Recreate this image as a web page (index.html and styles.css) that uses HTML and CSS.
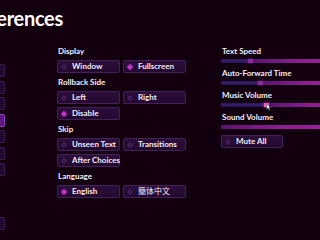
FILE: index.html
```html
<!DOCTYPE html>
<html>
<head>
<meta charset="utf-8">
<link rel="stylesheet" href="styles.css">
</head>
<body>
<header class="title"><h1>Preferences</h1></header>
<div class="main">
  <nav class="nav">
    <div class="navbtn">History</div>
    <div class="navbtn">Save</div>
    <div class="navbtn">Load</div>
    <div class="navbtn active">Preferences</div>
    <div class="navbtn">About</div>
    <div class="navbtn">Help</div>
    <div class="navbtn">Main Menu</div>
    <div class="navbtn last">Return</div>
  </nav>
  <section class="prefs">
    <div class="group">
      <div class="label">Display</div>
      <div class="opts">
        <div class="btn"><span class="dia"></span>Window</div>
        <div class="btn"><span class="dia on"></span>Fullscreen</div>
      </div>
    </div>
    <div class="group">
      <div class="label">Rollback Side</div>
      <div class="opts">
        <div class="btn"><span class="dia"></span>Left</div>
        <div class="btn"><span class="dia"></span>Right</div>
        <div class="btn"><span class="dia on"></span>Disable</div>
      </div>
    </div>
    <div class="group">
      <div class="label">Skip</div>
      <div class="opts">
        <div class="btn"><span class="dia"></span>Unseen Text</div>
        <div class="btn"><span class="dia"></span>Transitions</div>
        <div class="btn"><span class="dia"></span>After Choices</div>
      </div>
    </div>
    <div class="group">
      <div class="label">Language</div>
      <div class="opts">
        <div class="btn"><span class="dia on"></span>English</div>
        <div class="btn cjk"><span class="dia"></span>簡体中文</div>
      </div>
    </div>
  </section>
  <section class="sliders">
    <div class="label">Text Speed</div>
    <div class="slider"><div class="track"><div class="left" style="width:27px"></div><div class="thumb"></div><div class="right"></div></div></div>
    <div class="label">Auto-Forward Time</div>
    <div class="slider"><div class="track"><div class="left" style="width:37px"></div><div class="thumb"></div><div class="right"></div></div></div>
    <div class="label">Music Volume</div>
    <div class="slider"><div class="track"><div class="left" style="width:43px"></div><div class="thumb hot"></div><div class="right"></div>
      <svg class="cursor" width="5" height="8" viewBox="0 0 5 8"><path d="M0.5 0.5 L0.5 6.5 L2 5 L3.2 7.5 L4 7 L3 4.6 L4.6 4.6 Z" fill="#fff" stroke="#222" stroke-width="0.5"/></svg>
    </div></div>
    <div class="label">Sound Volume</div>
    <div class="slider"><div class="track"><div class="left" style="width:0px"></div><div class="thumb dim"></div><div class="right"></div></div></div>
    <div class="btn mute"><span class="dia"></span>Mute All</div>
  </section>
</div>
</body>
</html>
```

FILE: styles.css
```css
* { box-sizing: border-box; }
html, body { margin: 0; padding: 0; }
body {
  width: 320px;
  height: 240px;
  overflow: hidden;
  background: #12000f;
  color: #fff;
  font-family: Lato, "Noto Sans CJK JP", sans-serif;
}
.title {
  height: 46px;
  width: 63px;
  display: flex;
  justify-content: flex-end;
}
.title h1 {
  margin: 0;
  padding-top: 8px;
  font-size: 20px;
  line-height: 20px;
  font-weight: 700;
  letter-spacing: -0.3px;
  white-space: nowrap;
}
.main {
  display: flex;
  align-items: flex-start;
}
.nav {
  width: 5px;
  flex: none;
  padding-top: 18px;
  display: flex;
  flex-direction: column;
  align-items: flex-end;
  gap: 3.5px;
}
.navbtn {
  flex: none;
  width: 60px;
  height: 13px;
  border: 1px solid #3d1a52;
  background: #22082f;
  border-radius: 2px;
  font-size: 8px;
  font-weight: 700;
  line-height: 11px;
  text-align: right;
  padding-right: 4px;
  color: #5a3a6a;
}
.navbtn.active {
  background: #5a1880;
  border-color: #9a3ac0;
  color: #fff;
}
.navbtn.last { margin-top: 37.5px; }
.prefs {
  margin-left: 52px;
  width: 129px;
  flex: none;
  display: flex;
  flex-direction: column;
  gap: 4px;
}
.label {
  font-size: 8px;
  font-weight: 700;
  line-height: 10px;
  height: 10px;
  padding-left: 1px;
  color: #f4eef6;
  white-space: nowrap;
}
.group .label { margin-bottom: 4px; }
.opts {
  display: grid;
  grid-template-columns: 63px 63px;
  column-gap: 3px;
  row-gap: 3px;
}
.btn {
  height: 13px;
  border: 1px solid #43205a;
  background: linear-gradient(#2c0e3a, #230930);
  border-radius: 2px;
  display: flex;
  align-items: center;
  padding-left: 4px;
  font-size: 8px;
  font-weight: 700;
  line-height: 11px;
  color: #f2eaf4;
  white-space: nowrap;
}
.btn.cjk { font-weight: 400; }
.dia {
  flex: none;
  width: 4px;
  height: 4px;
  margin-right: 6px;
  transform: rotate(45deg);
  border: 1px solid #552a6e;
}
.dia.on {
  background: #b82ac4;
  border-color: #d040d0;
  box-shadow: 0 0 3px #a020b0;
}
.sliders {
  margin-left: 35px;
  flex: none;
  width: 120px;
  display: flex;
  flex-direction: column;
}
.slider {
  height: 12px;
  padding-top: 3px;
}
.track {
  position: relative;
  width: 150px;
  height: 4px;
  display: flex;
}
.track .left {
  flex: none;
  height: 4px;
  background: linear-gradient(#2a1458, #3a1f70 50%, #22104a);
}
.track .thumb {
  flex: none;
  width: 5px;
  height: 4px;
  background: #8a2c9e;
  box-shadow: 0 0 2px #a03ab0;
}
.track .thumb.hot {
  background: #ff5ad6;
  box-shadow: 0 0 3px #ff40c8;
}
.track .thumb.dim {
  width: 0;
  box-shadow: none;
}
.track .right {
  flex: 1;
  height: 4px;
  background: linear-gradient(90deg, #5a1470, #8e1e92 40%, #a224a4);
}
.cursor {
  position: absolute;
  left: 45px;
  top: 0px;
}
.btn.mute {
  margin-top: 1px;
  width: 62px;
}
```
